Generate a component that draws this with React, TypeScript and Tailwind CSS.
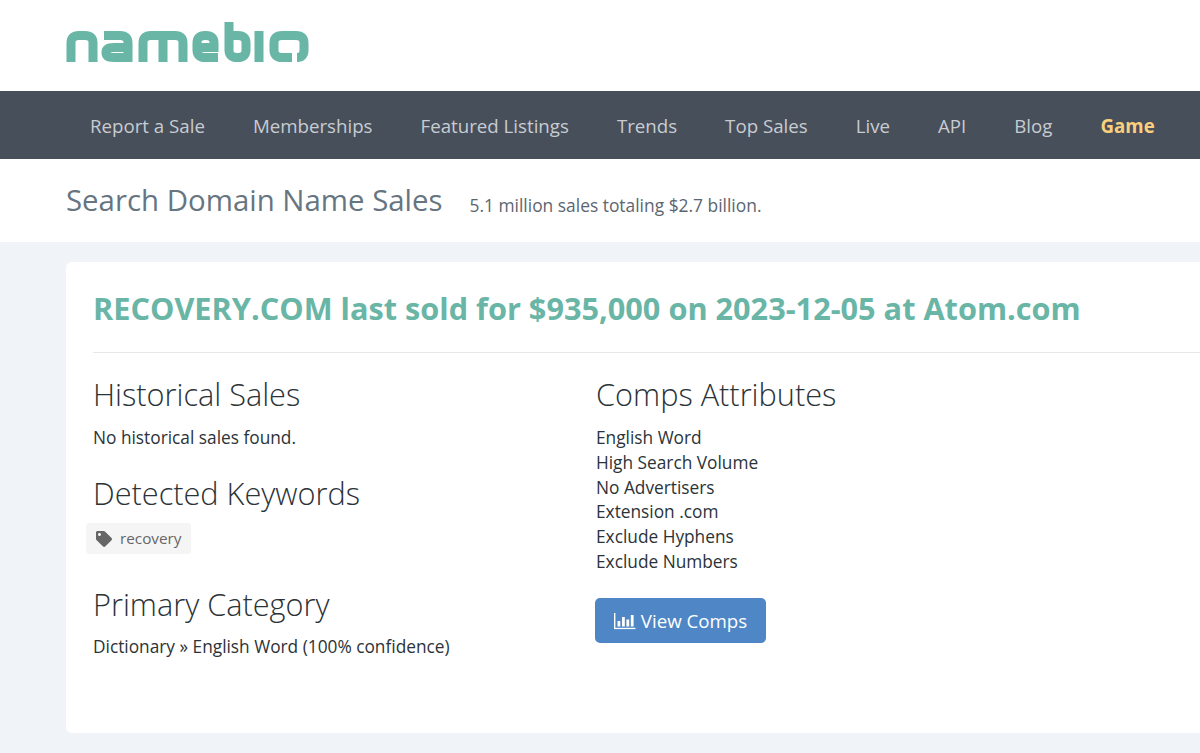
import { FaTag } from 'react-icons/fa';

const NAV = ['Report a Sale', 'Memberships', 'Featured Listings', 'Trends', 'Top Sales', 'Live', 'API', 'Blog'];
const COMPS = ['English Word', 'High Search Volume', 'No Advertisers', 'Extension .com', 'Exclude Hyphens', 'Exclude Numbers'];

function Logo() {
  return (
    <svg width="243" height="41" viewBox="0 0 243 41" fill="none" stroke="#69b5a6" strokeWidth="9" aria-label="namebio">
      <path d="M5 40V21Q5 13.500 13 13.500H19Q27 13.500 27 21V40" />
      <path d="M38 13.500H54Q62 13.500 62 21V35.500H48Q40 35.500 40 30.500Q40 25.500 48 25.500H60" />
      <path d="M77 40V21Q77 13.500 85 13.500H109Q117 13.500 117 21V40M97 13.500V40" />
      <path d="M152 35.500H139Q131 35.500 131 28V21Q131 13.500 139 13.500H140Q148 13.500 148 21V25.500H133" />
      <path d="M163 0V28Q163 35.500 171 35.500H172Q180 35.500 180 28V21Q180 13.500 172 13.500H163" />
      <path d="M193 9V40" />
      <path d="M226 35.500H216Q208 35.500 208 28V21Q208 13.500 216 13.500H230Q238 13.500 238 21V28Q238 35.500 231 35.500" />
    </svg>
  );
}

function BarsIcon() {
  return (
    <svg width="22" height="18" viewBox="0 0 22 18" fill="currentColor" aria-hidden="true">
      <rect x="0" y="1" width="1.4" height="16" />
      <rect x="0" y="15.8" width="21.5" height="1.3" />
      <rect x="3.5" y="9" width="2.8" height="5.5" />
      <rect x="8" y="5" width="2.8" height="9.5" />
      <rect x="12.4" y="7.5" width="2.8" height="7" />
      <rect x="16.8" y="3" width="2.8" height="11.5" />
    </svg>
  );
}

export default function App() {
  return (
    <div className="h-[753px] overflow-hidden bg-[#f0f4f9] font-['Open_Sans',sans-serif] text-[#2b3338]">
      <header className="flex h-[91px] items-start bg-white pl-[66px] pt-[22px]">
        <Logo />
      </header>
      <nav className="flex h-[68px] items-center gap-[48px] whitespace-nowrap bg-[#474f5b] pl-[90px] pt-[2px] text-[18.7px] text-[#c8ccd1]">
        {NAV.map((item) => (
          <span key={item}>{item}</span>
        ))}
        <span className="font-bold text-[#fbd07c]">Game</span>
      </nav>
      <div className="flex h-[83px] items-center bg-white pl-[66px]">
        <h1 className="text-[29.4px] text-[#66757f]">Search Domain Name Sales</h1>
        <span className="ml-[27px] mt-[10px] text-[17.4px] text-[#5c6670]">5.1 million sales totaling $2.7 billion.</span>
      </div>
      <main className="ml-[66px] mt-[20px] h-[471px] rounded-l-[6px] bg-white pl-[27px]">
        <h2 className="border-b border-[#e5e7e9] pb-[23px] pt-[25px] text-[30.7px] font-bold leading-[42px] text-[#69b5a6]">
          RECOVERY.COM last sold for $935,000 on 2023-12-05 at Atom.com
        </h2>
        <div className="flex">
          <section className="w-[502px]">
            <h3 className="mt-[21px] text-[30.7px] font-light leading-[40px]">Historical Sales</h3>
            <p className="mt-[12px] text-[17.3px] leading-[24px]">No historical sales found.</p>
            <h3 className="mt-[23px] text-[30.7px] font-light leading-[40px]">Detected Keywords</h3>
            <span className="-ml-[7px] mt-[10px] flex h-[31px] w-[105px] items-center gap-[8px] rounded-[3px] bg-[#f5f5f5] pl-[10px] text-[15.3px] text-[#666]">
              <FaTag size={16} />
              recovery
            </span>
            <h3 className="mt-[30px] text-[30.7px] font-light leading-[40px]">Primary Category</h3>
            <p className="mt-[11px] text-[17.3px] leading-[24px]">Dictionary » English Word (100% confidence)</p>
          </section>
          <section>
            <h3 className="ml-[1px] mt-[21px] text-[30.7px] font-light leading-[40px]">Comps Attributes</h3>
            <ul className="ml-[1px] mt-[12px] text-[17.3px] leading-[24.8px]">
              {COMPS.map((c) => (
                <li key={c}>{c}</li>
              ))}
            </ul>
            <button className="mt-[23px] flex h-[45px] w-[171px] items-center justify-center gap-[5px] rounded-[5px] bg-[#4e86c6] pt-[1px] text-[18.7px] text-white">
              <BarsIcon />
              View Comps
            </button>
          </section>
        </div>
      </main>
    </div>
  );
}
